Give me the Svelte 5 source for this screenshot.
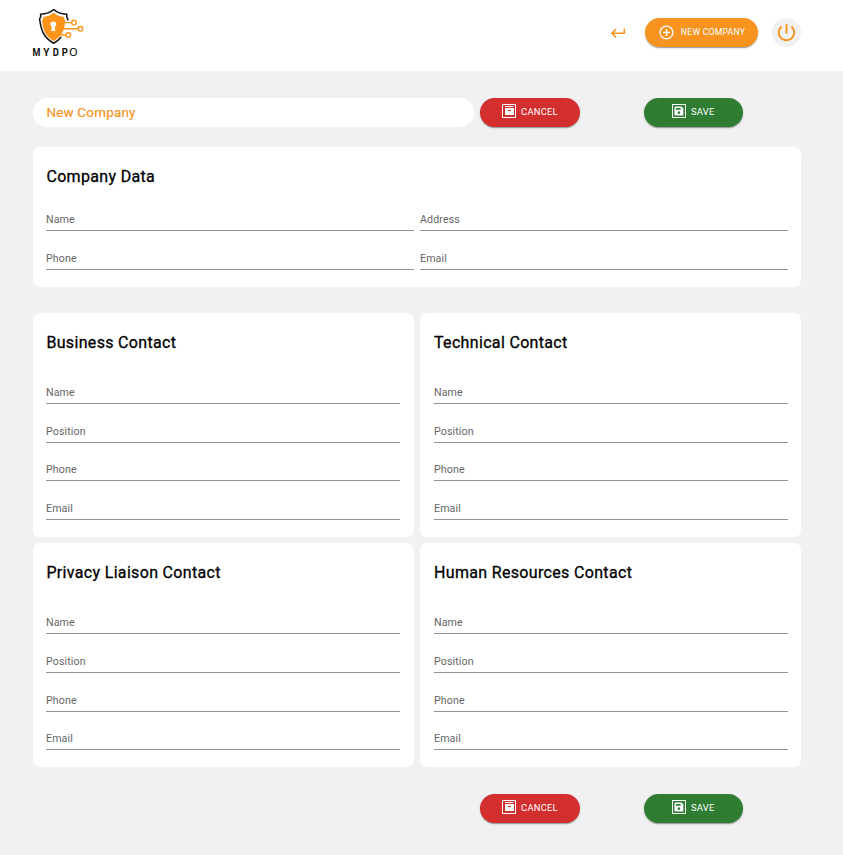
<script>
  const companyFields = ['Name', 'Address', 'Phone', 'Email'];
  const contactFields = ['Name', 'Position', 'Phone', 'Email'];
  const contacts = ['Business Contact', 'Technical Contact', 'Privacy Liaison Contact', 'Human Resources Contact'];
</script>

{#snippet actions()}
  <div class="actions">
    <button class="btn cancel">
      <svg class="boxed" width="14" height="14" viewBox="0 0 14 14">
        <rect x=".5" y=".5" width="13" height="13" fill="none" stroke="#fff" />
        <path d="M3 2h8.500v1H3zM3 4h9v7H3zM6 6v1h3v-1z" fill="#fff" fill-rule="evenodd" />
      </svg>
      <span>CANCEL</span>
    </button>
    <button class="btn save">
      <svg class="boxed" width="14" height="14" viewBox="0 0 14 14">
        <rect x=".5" y=".5" width="13" height="13" fill="none" stroke="#fff" />
        <path d="M3.400 2.400h6l2 2v6q0 1-1 1h-7q-1 0-1-1v-7q0-1 1-1zM3.900 3.900v1.800h4.800V3.900zM6.900 7.300a1.300 1.300 0 1 0 .01 0z" fill="#fff" fill-rule="evenodd" />
      </svg>
      <span>SAVE</span>
    </button>
  </div>
{/snippet}

<div class="page">
  <header>
    <svg class="logo" width="56" height="52" viewBox="0 0 56 52">
      <path d="M21.700 1.500C18.500 4.500 14 6 8.700 6.200C9 8.500 8.500 9.900 7.600 11C8.900 20.500 10.500 29 21.700 35.200C25 33.400 27.200 31.500 29.200 29M21.700 1.500C24.900 4.500 29.400 6 34.700 6.200C34.400 8.500 34.900 9.900 35.800 11L35.500 12.500" fill="none" stroke="#171717" stroke-width="1.600" />
      <path d="M21.700 4.500C18.500 7.500 15 8.700 11.200 9C11.200 11 10.800 11.900 10 12.700C11 21.500 12.800 27.900 21.700 32.900C30.600 27.900 32.400 21.500 33.400 12.700C32.600 11.900 32.200 11 32.200 9C28.400 8.700 24.900 7.500 21.700 4.500z" fill="#ff941b" />
      <circle cx="21.300" cy="16.200" r="2.800" fill="#fff" />
      <path d="M20 17h2.600l.7 6h-4z" fill="#fff" />
      <g fill="none" stroke="#ff941b" stroke-width="1.400">
        <path d="M32 14.600h7.600M31 20.800h15M27.500 27h6.500" />
        <circle cx="42" cy="14.600" r="2.300" />
        <circle cx="48.500" cy="20.800" r="2.300" />
        <circle cx="36.300" cy="27" r="2.300" />
      </g>
      <g class="wordmark">
        <text transform="translate(.5 48) scale(.86 1)">M</text>
        <text transform="translate(11.300 48) scale(.95 1)">Y</text>
        <text transform="translate(20.800 48) scale(.9 1)">D</text>
        <text transform="translate(29.700 48) scale(.9 1)">P</text>
        <text class="thin" transform="translate(36.900 48) scale(1.200 1)">O</text>
      </g>
    </svg>
    <div class="tools">
      <svg class="back" width="16" height="16" viewBox="0 0 24 24"><path d="M21.500 5.500v7H4M9 6.200L2.800 12.500 9 18.800" /></svg>
      <button class="btn new">
        <svg width="17" height="17" viewBox="0 0 24 24"><path d="M13 7h-2v4H7v2h4v4h2v-4h4v-2h-4zM12 2a10 10 0 1 0 0 20 10 10 0 0 0 0-20zm0 18.200a8.200 8.200 0 1 1 0-16.400 8.200 8.200 0 0 1 0 16.400z" fill="#fff" /></svg>
        <span>NEW COMPANY</span>
      </button>
      <button class="power" aria-label="Log out">
        <svg width="23" height="23" viewBox="0 0 24 24"><path d="M13 3h-2v10h2zM17.830 5.170l-1.420 1.420A6.920 6.920 0 0 1 19 12a7 7 0 1 1-11.420-5.420L6.170 5.170A8.930 8.930 0 0 0 3 12a9 9 0 1 0 14.830-6.830z" fill="#f7931e" /></svg>
      </button>
    </div>
  </header>

  <main>
    <div class="top">
      <div class="title">New Company</div>
      {@render actions()}
    </div>

    <section class="card company">
      <h2>Company Data</h2>
      <div class="pair">
        {#each companyFields as f}
          <div class="field">{f}</div>
        {/each}
      </div>
    </section>

    <div class="contacts">
      {#each contacts as c}
        <section class="card">
          <h2>{c}</h2>
          <div class="stack">
            {#each contactFields as f}
              <div class="field">{f}</div>
            {/each}
          </div>
        </section>
      {/each}
    </div>

    <div class="bottom">{@render actions()}</div>
  </main>
</div>

<style>
  :global(body) { background: #f1f1f1; }
  .page {
    box-sizing: border-box;
    width: 843px;
    height: 855px;
    background: #f1f1f1;
    font-family: Roboto, sans-serif;
    overflow: hidden;
  }
  header {
    box-sizing: border-box;
    height: 71px;
    background: #fff;
    display: flex;
    justify-content: space-between;
    padding: 8px 42px 0 32px;
  }
  .wordmark { font: 700 10.500px Roboto, sans-serif; fill: #111; }
  .thin { font-weight: 400; }
  .tools {
    display: flex;
    align-items: center;
    height: 49px;
  }
  .back { fill: none; stroke: #f7931e; stroke-width: 2.300; margin-right: 19px; }
  .btn {
    box-sizing: border-box;
    height: 29px;
    border: 0;
    border-radius: 15px;
    padding: 0 0 2px;
    display: flex;
    align-items: center;
    justify-content: center;
    color: #fff;
    font: 400 9.330px Roboto, sans-serif;
    letter-spacing: 0.270px;
    box-shadow: 0 2px 1px -1px rgba(0, 0, 0, .2), 0 1px 1px rgba(0, 0, 0, .14), 0 1px 3px rgba(0, 0, 0, .12);
  }
  .new { width: 113px; background: #f7931e; gap: 6px; font-size: 8.670px; letter-spacing: .22px; }
  .new svg { margin-top: 1px; }
  .power {
    width: 29px;
    height: 29px;
    margin-left: 14px;
    border: 0;
    border-radius: 50%;
    padding: 0;
    background: #f1f1f1;
    display: flex;
    align-items: center;
    justify-content: center;
  }
  main { padding: 27px 42px 0 33px; }
  .top { display: flex; gap: 6px; }
  .title {
    box-sizing: border-box;
    width: 441px;
    height: 29px;
    border-radius: 15px;
    background: #fff;
    color: #f7931e;
    padding-left: 13.400px;
    font-size: 13.330px;
    font-weight: 400;
    -webkit-text-stroke: .2px #f7931e;
    line-height: 29px;
    letter-spacing: .27px;
  }
  .actions { display: flex; gap: 64px; }
  .cancel { width: 100px; background: #d32f2f; gap: 5px; }
  .save { width: 99px; background: #2e7d32; gap: 4.500px; }
  .boxed { margin-bottom: 1px; }
  .card {
    box-sizing: border-box;
    background: #fff;
    border-radius: 7px;
    padding: 0 13px;
  }
  h2 {
    margin: 0;
    padding: 17px 0 0 .4px;
    font-size: 16px;
    font-weight: 400;
    -webkit-text-stroke: .3px #000;
    line-height: 26px;
    letter-spacing: .33px;
    color: #000;
  }
  .company { height: 140px; margin-top: 20px; }
  .pair {
    display: grid;
    grid-template-columns: 368px 368px;
    column-gap: 6px;
    row-gap: 15.670px;
    margin-top: 18px;
  }
  .field {
    box-sizing: border-box;
    height: 23px;
    border-bottom: 1px solid #949494;
    color: #666;
    font-size: 10.670px;
    line-height: 23px;
    letter-spacing: .1px;
  }
  .contacts {
    display: grid;
    grid-template-columns: 381px 381px;
    gap: 6.330px 6px;
    margin-top: 26px;
  }
  .contacts .card { height: 224px; }
  .contacts .card:nth-child(even) { padding-left: 14px; }
  .contacts .card:nth-child(even) h2 { padding-left: 0; }
  .stack {
    display: flex;
    flex-direction: column;
    gap: 15.670px;
    margin-top: 25px;
    width: 354px;
  }
  .bottom { padding: 26.670px 0 0 447px; }
</style>
